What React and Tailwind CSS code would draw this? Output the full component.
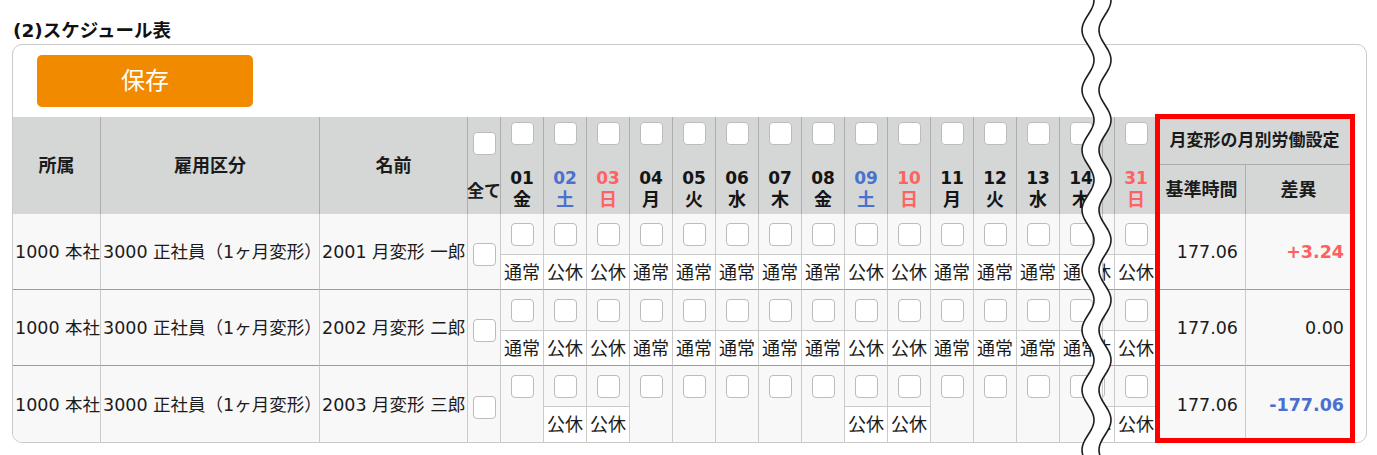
import React from 'react';

const FONT = "font-['DejaVu_Sans','Noto_Sans_CJK_JP',sans-serif]";

const DAYS = [
  { d: '01', w: '金' },
  { d: '02', w: '土', c: 'sat' },
  { d: '03', w: '日', c: 'sun' },
  { d: '04', w: '月' },
  { d: '05', w: '火' },
  { d: '06', w: '水' },
  { d: '07', w: '木' },
  { d: '08', w: '金' },
  { d: '09', w: '土', c: 'sat' },
  { d: '10', w: '日', c: 'sun' },
  { d: '11', w: '月' },
  { d: '12', w: '火' },
  { d: '13', w: '水' },
  { d: '14', w: '木' },
];

const FULL = ['通常', '公休', '公休', '通常', '通常', '通常', '通常', '通常', '公休', '公休', '通常', '通常', '通常', '通常'];
const HOLI = ['', '公休', '公休', '', '', '', '', '', '公休', '公休', '', '', '', ''];

const ROWS = [
  { shozoku: '1000 本社', koyo: '3000 正社員（1ヶ月変形）', name: '2001 月変形 一郎', shifts: FULL, base: '177.06', diff: '+3.24', tone: 'plus' },
  { shozoku: '1000 本社', koyo: '3000 正社員（1ヶ月変形）', name: '2002 月変形 二郎', shifts: FULL, base: '177.06', diff: '0.00', tone: 'zero' },
  { shozoku: '1000 本社', koyo: '3000 正社員（1ヶ月変形）', name: '2003 月変形 三郎', shifts: HOLI, base: '177.06', diff: '-177.06', tone: 'minus' },
];

const dayColor = (c) => (c === 'sat' ? 'text-[#4a72cc]' : c === 'sun' ? 'text-[#ff6262]' : 'text-[#151515]');

function Box() {
  return <div className="w-[23px] h-[23px] shrink-0 bg-white border border-[#bcbcbc] rounded-[4px]" />;
}

function HeadDay({ d, w, c, extra = '' }) {
  return (
    <div className={`flex flex-col items-center pt-[5px] ${extra}`}>
      <Box />
      <div className={`mt-[23px] text-[17px] leading-[21px] font-bold ${dayColor(c)}`}>{d}</div>
      <div className={`text-[18px] leading-[21px] font-bold ${dayColor(c)}`}>{w}</div>
    </div>
  );
}

function DayCell({ shift, last, extra = '' }) {
  return (
    <div className={`flex flex-col border-r border-[#cbcbcb] ${last ? '' : 'border-b border-b-[#9c9c9c]'} ${extra}`}>
      <div className="h-[40px] shrink-0 flex items-center justify-center bg-[#f8f8f8]">
        <Box />
      </div>
      {shift ? (
        <div className="flex-1 border-t border-[#cbcbcb] bg-white flex items-center justify-center text-[18px] whitespace-nowrap">
          {shift}
        </div>
      ) : (
        <div className="flex-1 bg-[#f8f8f8]" />
      )}
    </div>
  );
}

function Wave() {
  const pts = [];
  for (let y = -4; y <= 460; y += 2) {
    pts.push([18 - 6 * Math.cos((2 * Math.PI * (y - 30)) / 60), y]);
  }
  const left = pts.map(([x, y], i) => `${i ? 'L' : 'M'}${x.toFixed(2)},${y}`).join(' ');
  const right = pts.map(([x, y], i) => `${i ? 'L' : 'M'}${(x + 17).toFixed(2)},${y}`).join(' ');
  const fill =
    left +
    ' ' +
    [...pts].reverse().map(([x, y]) => `L${(x + 17).toFixed(2)},${y}`).join(' ') +
    ' Z';
  return (
    <svg className="absolute left-[1070px] top-0 pointer-events-none" width="50" height="455" viewBox="0 0 50 455">
      <path d={fill} fill="#ffffff" />
      <path d={left} fill="none" stroke="#1e1e1e" strokeWidth="1.6" />
      <path d={right} fill="none" stroke="#1e1e1e" strokeWidth="1.6" />
    </svg>
  );
}

export default function App() {
  const head = 'bg-[#d5d7d7] border-r border-[#adadad]';
  return (
    <div className={`relative w-[1377px] h-[455px] overflow-hidden bg-white text-[#1b1b1b] ${FONT}`}>
      {/* タイトル */}
      <div className="pl-[13px] pt-[19px] h-[44px] text-[18.5px] leading-[24px] font-bold text-[#111]">(2)スケジュール表</div>

      <div className="ml-[12px] w-[1355px] border border-[#cacaca] rounded-[10px] overflow-hidden pt-[10px]">
        <button className="ml-[24px] w-[216px] h-[52px] rounded-[5px] bg-[#f28a00] text-white text-[24px] flex items-center justify-center">
          保存
        </button>

        <div className="mt-[10px] grid grid-cols-[88px_219px_148px_33px_repeat(14,43px)_12px_43px_88px_106px] grid-rows-[48px_49px_76px_76px_76px] w-[1339px]">
          {/* ヘッダー */}
          <div className={`row-span-2 ${head} flex items-center justify-center text-[18px] font-bold`}>所属</div>
          <div className={`row-span-2 ${head} flex items-center justify-center text-[18px] font-bold`}>雇用区分</div>
          <div className={`row-span-2 ${head} flex items-center justify-center text-[18px] font-bold`}>名前</div>
          <div className={`row-span-2 ${head} flex flex-col items-center pt-[15px]`}>
            <Box />
            <div className="mt-[26px] text-[17px] leading-[20px] font-bold whitespace-nowrap">全て</div>
          </div>
          {DAYS.map((x) => (
            <HeadDay key={x.d} {...x} extra={`row-span-2 ${head}`} />
          ))}
          <div className={`row-span-2 ${head} flex justify-end overflow-hidden`}>
            <HeadDay d="30" w="土" c="sat" extra="w-[43px] shrink-0" />
          </div>
          <HeadDay d="31" w="日" c="sun" extra={`row-span-2 ${head}`} />
          <div className={`col-span-2 ${head} border-b border-b-[#adadad] flex items-center justify-center text-[17px] font-bold whitespace-nowrap`}>
            月変形の月別労働設定
          </div>
          <div className={`${head} flex items-center justify-center text-[18px] font-bold`}>基準時間</div>
          <div className={`${head} flex items-center justify-center text-[18px] font-bold`}>差異</div>

          {/* データ行 */}
          {ROWS.map((r, i) => {
            const last = i === ROWS.length - 1;
            const cell = `bg-[#f8f8f8] border-r border-[#cbcbcb] ${last ? '' : 'border-b border-b-[#9c9c9c]'}`;
            const tone =
              r.tone === 'plus' ? 'text-[#ff5f5f] font-bold' : r.tone === 'minus' ? 'text-[#4a6fcf] font-bold' : '';
            return (
              <React.Fragment key={r.name}>
                <div className={`${cell} flex items-center pl-[2px] pt-[2px] text-[17.5px] whitespace-nowrap`}>{r.shozoku}</div>
                <div className={`${cell} flex items-center pl-[2px] pt-[2px] text-[17.5px] whitespace-nowrap`}>{r.koyo}</div>
                <div className={`${cell} flex items-center pl-[2px] pt-[2px] text-[17.5px] whitespace-nowrap`}>{r.name}</div>
                <div className={`${cell} flex items-center justify-center pt-[6px]`}>
                  <Box />
                </div>
                {r.shifts.map((s, j) => (
                  <DayCell key={j} shift={s} last={last} />
                ))}
                <div className="flex justify-end overflow-hidden">
                  <DayCell shift="公休" last={last} extra="w-[43px] shrink-0" />
                </div>
                <DayCell shift="公休" last={last} />
                <div className={`${cell} flex items-center justify-end pr-[7px] pt-[2px] text-[17.5px]`}>{r.base}</div>
                <div className={`${cell} flex items-center justify-end pr-[7px] pt-[2px] text-[17.5px] ${tone}`}>{r.diff}</div>
              </React.Fragment>
            );
          })}
        </div>
      </div>

      {/* 注記の赤枠 */}
      <div className="absolute left-[1155px] top-[114px] w-[200px] h-[329px] border-[5px] border-[#ff0000] pointer-events-none" />

      <Wave />
    </div>
  );
}
